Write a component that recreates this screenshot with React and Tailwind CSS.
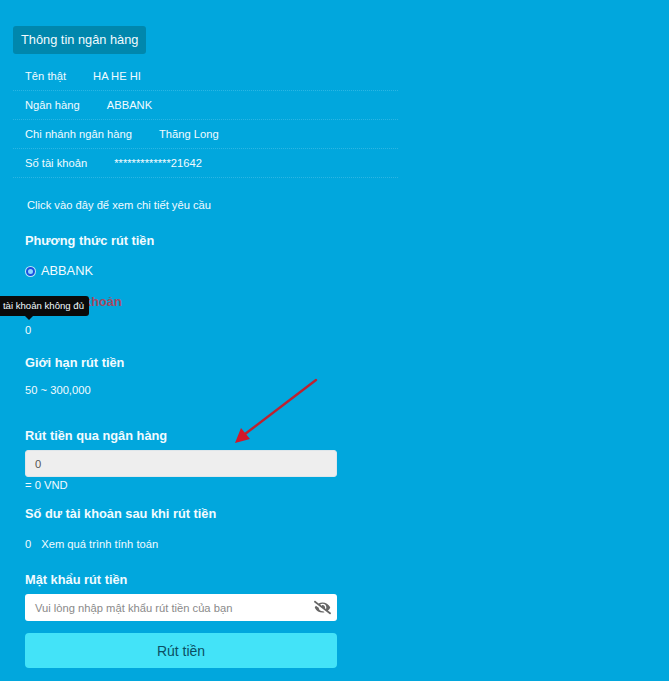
import { FaEyeSlash } from 'react-icons/fa'

const bankRows = [
  { label: 'Tên thật', value: 'HA HE HI' },
  { label: 'Ngân hàng', value: 'ABBANK' },
  { label: 'Chi nhánh ngân hàng', value: 'Thăng Long' },
  { label: 'Số tài khoản', value: '*************21642' },
]

function Heading({ children, className = 'text-[#f2fbff]' }) {
  return <h3 className={`text-[12.8px] leading-[16px] font-bold ${className}`}>{children}</h3>
}

/**
 * Withdraw form - bank info table and the withdrawal fields
 */
export default function App() {
  return (
    <div className="relative w-[669px] h-[681px] overflow-hidden bg-[#01a7dd] text-[#f2fbff] text-[11.2px] leading-[16px] font-['Liberation_Sans',Arial,sans-serif]">
      <div className="pt-[26px]">
        {/* Bank info */}
        <div className="ml-[13px] w-[385px]">
          <div className="inline-flex h-[28px] items-center rounded-[3px] bg-[#0087ad] px-2 text-[12.8px]">
            Thông tin ngân hàng
          </div>
          <div className="mt-[8px]">
            {bankRows.map((row) => (
              <div
                key={row.label}
                className="flex h-[29px] items-center gap-[27px] border-b border-dotted border-[#2bb6e4] pl-3"
              >
                <span>{row.label}</span>
                <span>{row.value}</span>
              </div>
            ))}
          </div>
          <p className="mt-[19px] pl-[14px]">Click vào đây để xem chi tiết yêu cầu</p>
        </div>

        {/* Form */}
        <div className="ml-[25px] mt-[20px] w-[312px]">
          <Heading>Phương thức rút tiền</Heading>

          <label className="mt-[14px] flex h-[16px] items-center gap-[6px] text-[12.8px]">
            <span className="ml-[1px] h-[9px] w-[9px] rounded-full border-2 border-[#1a4fe0] bg-[#8fd6ff] ring-1 ring-white/70" />
            ABBANK
          </label>

          <Heading className="mt-[15px] text-[#a64a62]">Số dư tài khoản</Heading>
          <p className="mt-[12px]">0</p>

          <Heading className="mt-[17px]">Giới hạn rút tiền</Heading>
          <p className="mt-[11px]">50 ~ 300,000</p>

          <Heading className="mt-[30px]">Rút tiền qua ngân hàng</Heading>
          <div className="mt-[6px] flex h-[27px] items-center rounded-[3px] border border-[#dfe6ea] bg-[#eeeeee] px-[9px] text-[#555555]">0</div>
          <p>= 0 VND</p>

          <Heading className="mt-[13px]">Số dư tài khoản sau khi rút tiền</Heading>
          <div className="mt-[14px] flex gap-[10px]">
            <span>0</span>
            <span>Xem quá trình tính toán</span>
          </div>

          <Heading className="mt-[20px]">Mật khẩu rút tiền</Heading>
          <div className="mt-[6px] flex h-[27px] items-center justify-between rounded-[3px] bg-white pl-[10px] pr-[6px]">
            <span className="text-[#8a8a8a]">Vui lòng nhập mật khẩu rút tiền của bạn</span>
            <FaEyeSlash size={17} className="text-[#666666]" />
          </div>

          <button className="mt-[12px] h-[35px] w-full rounded-[4px] bg-[#43e3f8] text-[14px] text-[#0b4f63]">
            Rút tiền
          </button>
        </div>
      </div>

      {/* Tooltip over the balance label */}
      <div className="absolute left-0 top-[296px] flex h-[20px] w-[89px] items-center justify-end rounded-r-[3px] bg-[#0a0a0a] pr-[5px] text-[9.6px] whitespace-nowrap">
        tài khoản không đủ
      </div>
      <div className="absolute left-[25px] top-[316px] h-0 w-0 border-x-[4px] border-t-[4px] border-x-transparent border-t-[#0a0a0a]" />

      {/* Annotation arrow */}
      <svg className="absolute left-[225px] top-[370px]" width="100" height="80" viewBox="0 0 100 80" fill="none">
        <path d="M91 10 L20 64" stroke="#bd2230" strokeWidth="2.4" strokeLinecap="round" />
        <path d="M10 73 L16 58 L25 69 Z" fill="#d3182a" />
      </svg>
    </div>
  )
}
